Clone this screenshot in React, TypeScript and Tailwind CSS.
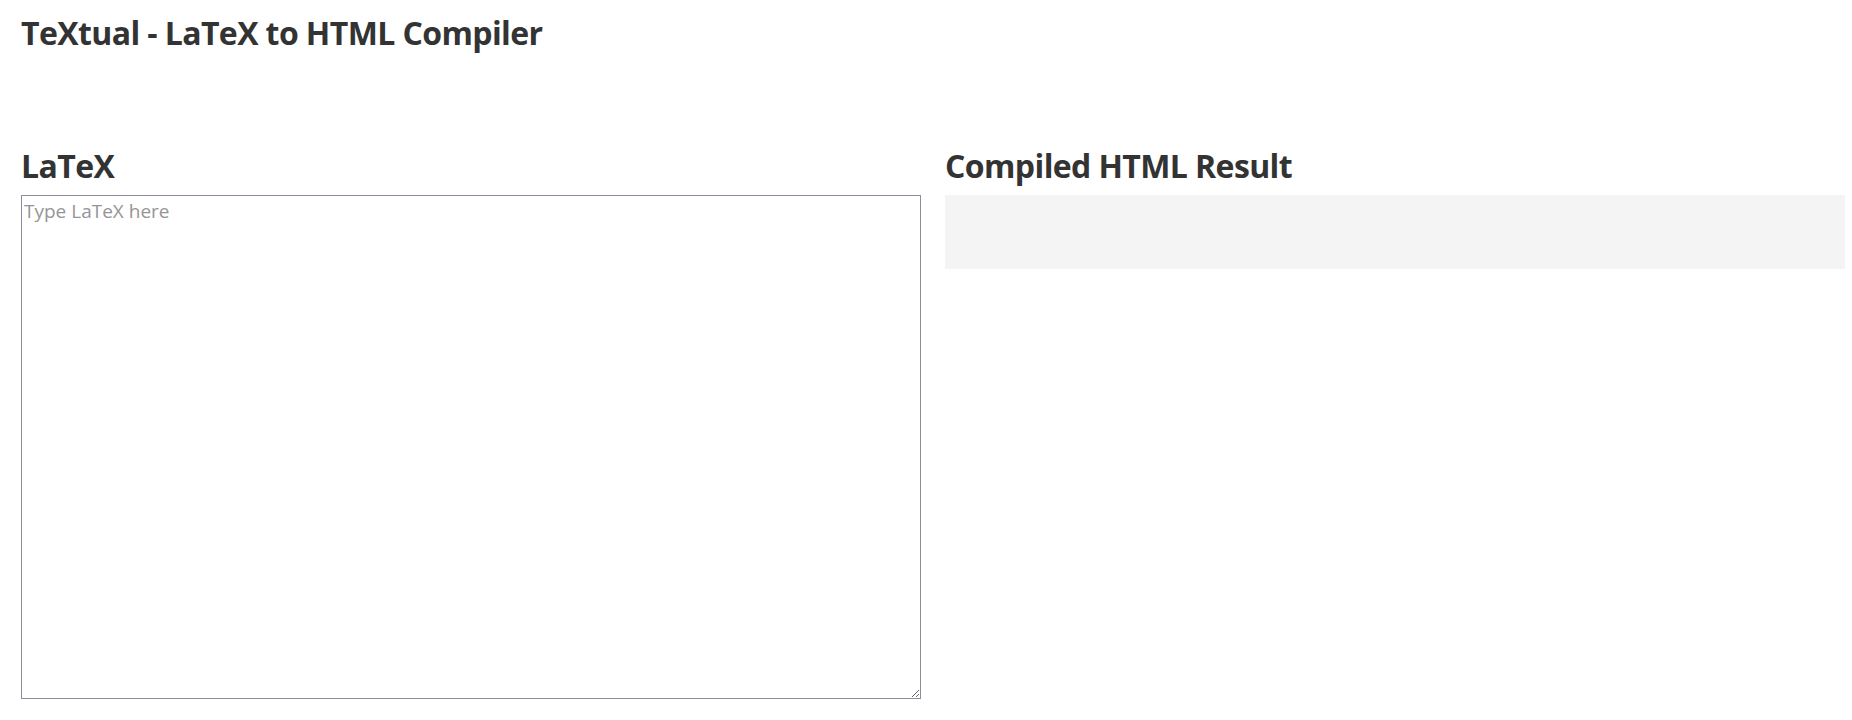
export default function App() {
  return (
    <div className="min-h-screen bg-white px-[21px] font-['Open_Sans',sans-serif] text-[#333]">
      <h1 className="pt-[14px] text-[32px] font-bold leading-[38px] tracking-[-0.6px]">
        TeXtual - LaTeX to HTML Compiler
      </h1>

      <div className="mt-[95px] grid grid-cols-[900px_900px] gap-x-[24px]">
        <section>
          <h2 className="text-[32px] font-bold leading-[38px] tracking-[-0.6px]">LaTeX</h2>
          <textarea
            placeholder="Type LaTeX here"
            className="mt-[10px] block h-[504px] w-[900px] border border-[#8f8b9b] bg-white px-[2px] pt-[1px] text-[19px] text-[#333] placeholder:text-[#959595] focus:outline-none"
          />
        </section>

        <section>
          <h2 className="text-[32px] font-bold leading-[38px] tracking-[-0.6px]">Compiled HTML Result</h2>
          <div className="mt-[10px] h-[74px] w-[900px] bg-[#f4f4f4]" />
        </section>
      </div>
    </div>
  );
}
